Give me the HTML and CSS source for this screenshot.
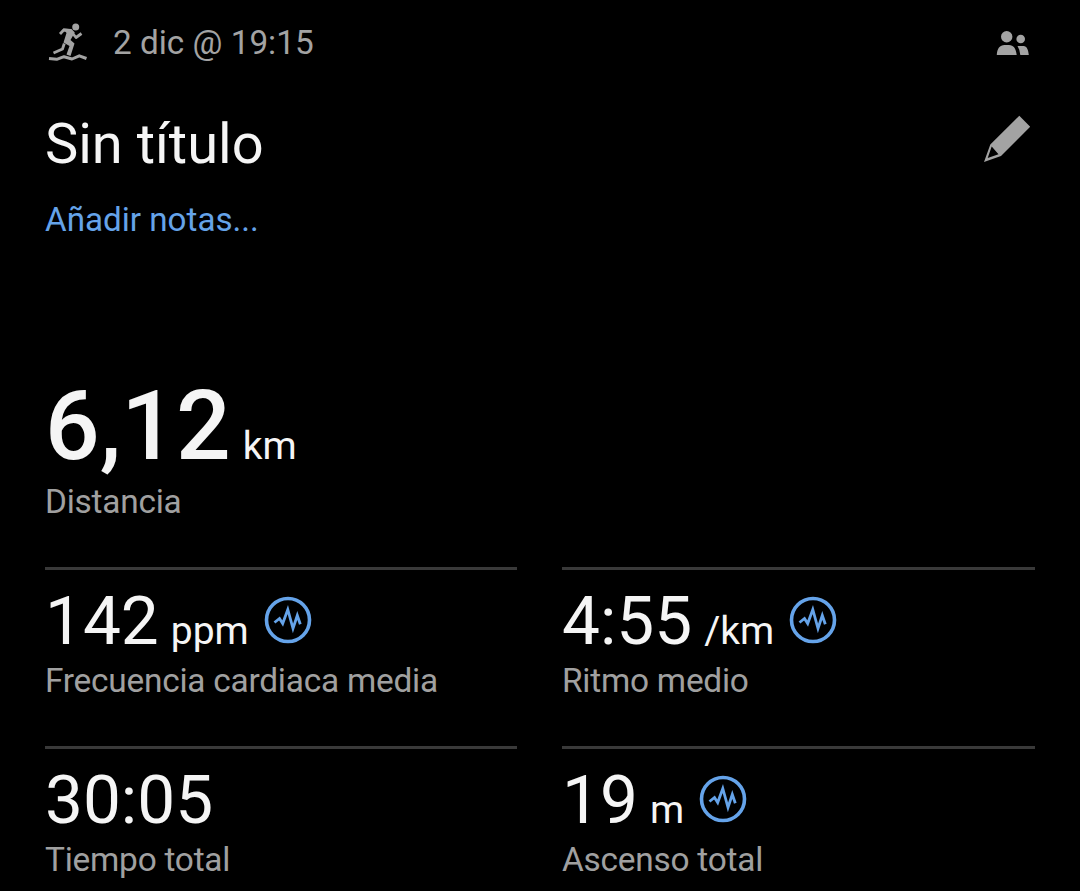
FILE: index.html
```html
<!DOCTYPE html>
<html lang="es"><head><meta charset="utf-8"><title>Actividad</title><link rel="stylesheet" href="styles.css"></head>
<body>
<svg class="defs" aria-hidden="true"><symbol id="wave" viewBox="0 0 48 48"><circle cx="24" cy="24" r="21.500" fill="none" stroke="currentColor" stroke-width="3.600"/><path d="M10.500 26.500L15.500 22.500L18.700 27.500L23.800 13.500L29 32.500L33.300 19.500L36.300 28.300" fill="none" stroke="currentColor" stroke-width="2.800" stroke-miterlimit="8"/></symbol></svg>
<main class="activity">
<header class="meta">
<svg class="runner" viewBox="0 0 40 40"><circle cx="27.700" cy="5" r="3.500"/><path class="body" d="M15 6.500L23.500 7L26.800 10.500L22.500 18L26.500 21.500L22.500 34L18.500 32.500L21.500 24L15.500 20.500L18.500 11Z"/><path class="limb" d="M12 12L15.700 8L21 8.500M24 10.500L28 15.500L33.500 11.500M16.300 21.500L14.500 27L5.500 31"/><path class="limb ground" d="M1 36.500L8.700 37.300L16 34.700L24 37L31.300 33.800L38.500 36.500"/></svg>
<span class="date">2 dic @ 19:15</span>
<svg class="people" viewBox="0 0 34 26"><circle cx="10.700" cy="7.700" r="5.700"/><circle cx="24.700" cy="10" r="4.300"/><path d="M.8 26C1 19.500 4 16 8.500 16H13C17.500 16 20 19.500 20.700 26ZM21.500 17H27.500C31 17 32.300 21 32.800 26H24.300Q23.800 20.500 21.500 17Z"/></svg>
</header>
<div class="heading"><h1 class="title">Sin título</h1><svg class="pencil" viewBox="0 0 48 48"><path fill-rule="evenodd" d="M36.300 .8L47.200 11.700L18 41L1 47L7.300 29.500ZM8.700 31.500L4.700 43L15.500 39.300Z"/></svg></div>
<a class="notes">Añadir notas...</a>
<section class="distance"><div class="value"><strong class="big">6,12</strong><span class="unit">km</span></div><div class="label">Distancia</div></section>
<section class="stats">
<div class="stat"><div class="value"><span class="num">142</span><span class="unit">ppm</span><svg class="wave"><use href="#wave"/></svg></div><div class="label">Frecuencia cardiaca media</div></div>
<div class="stat"><div class="value"><span class="num">4:55</span><span class="unit">/km</span><svg class="wave"><use href="#wave"/></svg></div><div class="label">Ritmo medio</div></div>
<div class="stat"><div class="value"><span class="num">30:05</span></div><div class="label">Tiempo total</div></div>
<div class="stat"><div class="value"><span class="num">19</span><span class="unit">m</span><svg class="wave"><use href="#wave"/></svg></div><div class="label">Ascenso total</div></div>
</section>
</main></body></html>
```
FILE: styles.css
```css
* { box-sizing: border-box; }
body { margin: 0; background: #000; color: #f5f5f5; font-family: Roboto, sans-serif; }
.defs { display: none; }
.activity { height: 891px; padding: 22px 45px 0; overflow: hidden; }
.meta { display: flex; align-items: center; height: 40px; color: #a3a3a3; }
.runner { width: 40px; height: 40px; margin-left: 3px; fill: currentColor; }
.limb { fill: none; stroke: currentColor; stroke-width: 2.8; stroke-linejoin: round; }
.ground { stroke-width: 3; }
.date { margin-left: 25px; padding-top: 2px; font-size: 33.3px; line-height: 40px; }
.people { width: 34px; height: 26px; margin-left: auto; margin-right: 5px; fill: currentColor; }
.heading { display: flex; justify-content: space-between; height: 66px; margin-top: 48px; }
.title { margin: 0; padding-top: 1px; font-size: 56px; font-weight: 400; line-height: 66px; }
.pencil { width: 48px; height: 48px; margin: 5px 4px 0 0; fill: #a3a3a3; }
.notes { display: block; margin-top: 24px; color: #65a3e9; font-size: 33.2px; line-height: 40px; }
.distance { margin-top: 129px; height: 198px; }
.value { display: flex; align-items: baseline; white-space: nowrap; }
.big { font-size: 96.3px; font-weight: 500; line-height: 115px; }
.unit { font-size: 39px; margin-left: 12px; }
.label { color: #a0a0a0; font-size: 33.4px; line-height: 40px; letter-spacing: -0.23px; }
.distance .label { margin-top: -2px; }
.stats { display: grid; grid-template-columns: 472px 473px; column-gap: 45px; }
.stat { height: 179px; padding-top: 11px; border-top: 3px solid #393939; }
.stat .value { height: 80px; }
.num { font-size: 67.5px; line-height: 79px; }
.wave { width: 48px; height: 48px; margin: 15px 0 0 15px; align-self: flex-start; color: #65a3e9; }
```
